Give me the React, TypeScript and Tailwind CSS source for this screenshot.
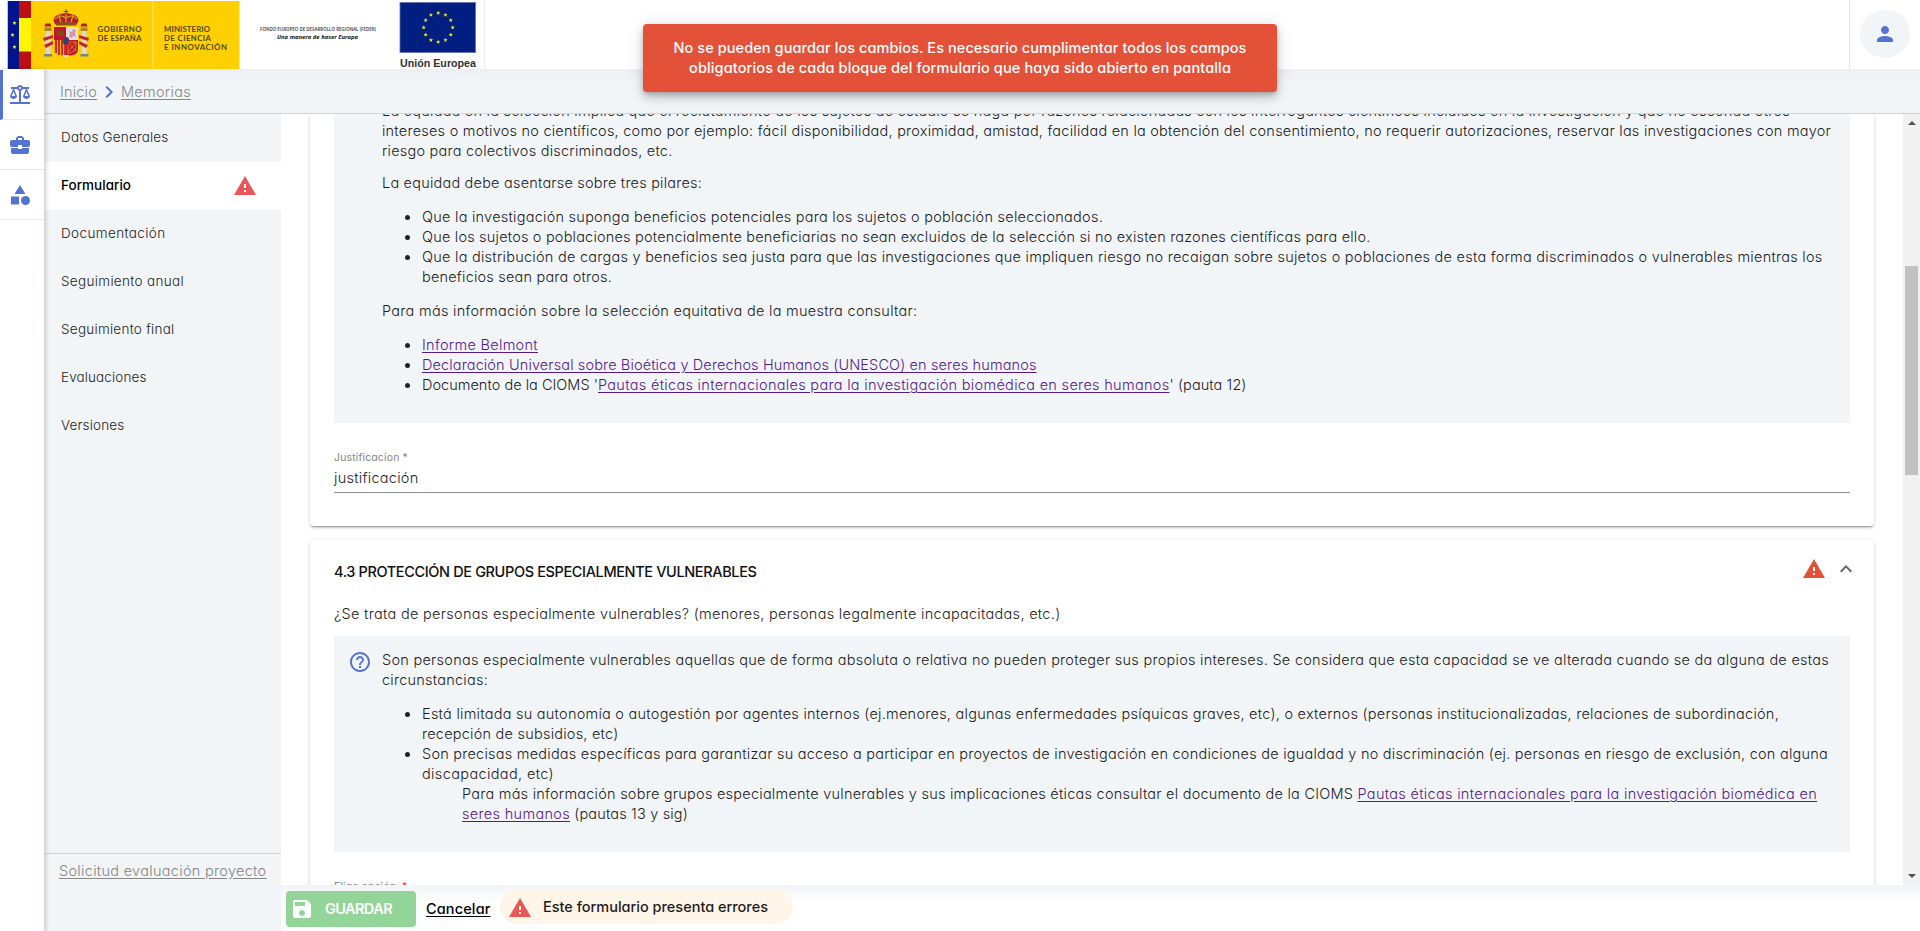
import { useLayoutEffect, useRef, useState } from 'react';
import {
  MdBalance,
  MdBusinessCenter,
  MdCategory,
  MdChevronRight,
  MdExpandLess,
  MdHelpOutline,
  MdPerson,
  MdSave,
  MdWarning,
} from 'react-icons/md';

/** Text run whose tracking is adjusted so that it takes `w` pixels. */
function Fit({ w, children, className = '' }: { w: number; children: string; className?: string }) {
  const ref = useRef<HTMLSpanElement>(null);
  const [spacing, setSpacing] = useState(0);
  useLayoutEffect(() => {
    const el = ref.current;
    if (!el) return;
    const previous = el.style.letterSpacing;
    el.style.letterSpacing = '0px';
    const natural = el.getBoundingClientRect().width;
    el.style.letterSpacing = previous;
    setSpacing((w - natural) / children.length);
  }, [w, children]);
  return (
    <span ref={ref} className={`whitespace-pre ${className}`} style={{ letterSpacing: `${spacing}px` }}>
      {children}
    </span>
  );
}

const link = 'text-[#551a8b] underline underline-offset-2';

function Line({ w, children }: { w: number; children: string }) {
  return (
    <div className="h-5">
      <Fit w={w}>{children}</Fit>
    </div>
  );
}

function Item({ children }: { children: React.ReactNode }) {
  return (
    <li className="flex">
      <span className="mt-2 mr-[12px] h-[5px] w-[5px] shrink-0 rounded-full bg-[#222]" />
      <div>{children}</div>
    </li>
  );
}

const starPath = 'M0-1 .24-.31.95-.31.38.12.59.81 0 .4-.59.81-.38.12-.95-.31-.24-.31Z';
const starAngles = [0, 30, 60, 90, 120, 150, 180, 210, 240, 270, 300, 330];

function GovLogo() {
  return (
    <svg width="484" height="69" viewBox="0 0 484 69" className="block shrink-0">
      <rect x="7" y="1" width="232.500" height="68" fill="#ffd000" />
      <rect x="8" y="1" width="12" height="68" fill="#00148c" />
      <rect x="19" y="1" width="12" height="68" fill="#bd1013" />
      <rect x="19" y="18" width="12" height="33.500" fill="#fff500" />
      <g fill="#fff04a">
        <path d={starPath} transform="translate(14.500 23) scale(2.300)" />
        <path d={starPath} transform="translate(12.500 35) scale(2.300)" />
        <path d={starPath} transform="translate(14.500 47) scale(2.300)" />
      </g>
      <rect x="152.300" y="1" width="1.300" height="68" fill="#ffe25c" />
      {/* coat of arms */}
      <g>
        <path d="M54 22c-2-5 3-8 12-9 9 1 14 4 12 9l-2 3H56Z" fill="#b3202a" />
        <path d="M55 19c4-4 7-4 11-1 4-3 7-3 11 1M59 15l2 8M73 15l-2 8M66 11v12" stroke="#d8a21d" strokeWidth="1.200" fill="none" />
        <path d="M65.200 9.500h1.600v1.500h1.500v1h-1.500v2h-1.600v-2h-1.500v-1h1.500Z" fill="#7a5a20" />
        <path d="M56 23c6-1.500 14-1.500 20 0v2.500H56Z" fill="#8f4b1d" />
        <path d="M54 27h12v13H54Z" fill="#c2152b" />
        <path d="M57 36v-6h1.500v1.500h1.300V30h1.600v1.500h1.300V30H64v6Z" fill="#7d4a18" />
        <path d="M66 27h12v13H66Z" fill="#eedcdc" />
        <path d="m69 37 1-3-1-3 3 1 1-3 3 1-1 3 1 4-3-1-1 2Z" fill="#cf9aa8" />
        <path d="M54 40h12v16c-7 0-12-2-12-7Z" fill="#f2b117" />
        <path d="M56 40v13M59 40v15M62 40v15.500M65 40v16" stroke="#c2152b" strokeWidth="1.600" />
        <path d="M66 40h12v9c0 5-5 7-12 7Z" fill="#c2152b" />
        <path d="M68 42h8v8l-8 4ZM68 42l8 9M76 42l-8 10" stroke="#dd8d22" strokeWidth=".8" fill="none" />
        <path d="M62 55h8l-4 2.500Z" fill="#e9e2d2" />
        <ellipse cx="66" cy="41" rx="3" ry="3.700" fill="#174a80" stroke="#b3202a" strokeWidth="1" />
        {/* pillars */}
        <rect x="46" y="30" width="4.500" height="24" fill="#ded8cc" />
        <rect x="82" y="30" width="4.500" height="24" fill="#ded8cc" />
        <path d="M44.500 27.500h7V31h-7ZM80.500 27.500h7V31h-7Z" fill="#a98524" />
        <path d="M45.500 23.500h5l1 3h-7ZM81.500 23.500h5l1 3h-7Z" fill="#b3202a" />
        <path d="M44 54h8v2.500h-8ZM80.500 54h8v2.500h-8Z" fill="#71868c" />
        <path d="m43 38 10-3v3l-9 3ZM44 45l9-4v3l-7 4ZM89 38l-10-3v3l9 3ZM88 45l-9-4v3l7 4Z" fill="#c0272d" />
      </g>
      <g fontFamily="Lato, 'Liberation Sans', sans-serif" fontSize="7.800" fontWeight="700" fill="#54480f">
        <text x="97.500" y="31.800" textLength="44">GOBIERNO</text>
        <text x="97.500" y="40.800" textLength="44">DE ESPAÑA</text>
        <text x="164" y="31.800" textLength="46">MINISTERIO</text>
        <text x="164" y="40.800" textLength="47">DE CIENCIA</text>
        <text x="164" y="49.800" textLength="63">E INNOVACIÓN</text>
      </g>
      <g fontFamily="'Open Sans', sans-serif" fill="#333">
        <text x="260" y="31" fontSize="4.600" fontWeight="600" textLength="116" lengthAdjust="spacingAndGlyphs">
          FONDO EUROPEO DE DESARROLLO REGIONAL (FEDER)
        </text>
        <text x="277" y="38.500" fontSize="5.800" fontWeight="700" fontStyle="italic" textLength="81" lengthAdjust="spacingAndGlyphs" fill="#111">
          Una manera de hacer Europa
        </text>
      </g>
      <rect x="400" y="2.500" width="75.500" height="50" fill="#001f80" stroke="#6073ae" strokeWidth=".8" />
      {starAngles.map((a) => (
        <path
          key={a}
          d={starPath}
          fill="#f7ec1e"
          transform={`translate(${438.2 + 14.5 * Math.sin((a * Math.PI) / 180)} ${27.5 - 14.5 * Math.cos((a * Math.PI) / 180)}) scale(2.3)`}
        />
      ))}
      <text x="400" y="66.500" fontFamily="'Liberation Sans', sans-serif" fontSize="10.500" fontWeight="700" fill="#333" textLength="76" lengthAdjust="spacingAndGlyphs">
        Unión Europea
      </text>
    </svg>
  );
}

const menu = [
  { label: 'Datos Generales', w: 107.5 },
  { label: 'Formulario', w: 70, active: true },
  { label: 'Documentación', w: 104.5 },
  { label: 'Seguimiento anual', w: 123 },
  { label: 'Seguimiento final', w: 113.5 },
  { label: 'Evaluaciones', w: 85.5 },
  { label: 'Versiones', w: 63.5 },
];

const card = 'shrink-0 bg-white px-6 shadow-[0_3px_1px_-2px_rgba(0,0,0,0.2),0_2px_2px_0_rgba(0,0,0,0.14),0_1px_5px_0_rgba(0,0,0,0.12)]';

export default function App() {
  return (
    <div className="relative flex h-[931px] w-[1920px] flex-col overflow-hidden bg-white font-['Inter','Open_Sans',sans-serif] text-[14.5px] leading-5 font-light text-[#1c1c1c] [font-feature-settings:'cv11']">
      <header className="flex h-[69px] shrink-0 justify-between bg-white">
        <div className="flex border-r border-[#ececf0]">
          <GovLogo />
        </div>
        <div className="flex w-[71px] items-start border-l border-[#e6e7ea] pt-[10px] pl-[10px]">
          <div className="flex h-12 w-[50px] items-center justify-center rounded-[50%] bg-[#f1f5f8]">
            <MdPerson size={24} color="#5472d0" />
          </div>
        </div>
      </header>

      <div className="flex min-h-0 flex-1">
        <nav className="z-10 flex w-[45px] shrink-0 flex-col border-r border-[#d5d7da] bg-white pt-px text-[#5472d0] shadow-[1px_0_4px_rgba(0,0,0,0.18)]">
          <div className="flex h-[50px] items-center border-b border-l-[3px] border-b-[#e8e8e8] border-l-[#5472d0] pl-[5px]">
            <MdBalance size={24} />
          </div>
          <div className="flex h-[50px] items-center border-b border-[#e8e8e8] pl-2">
            <MdBusinessCenter size={24} />
          </div>
          <div className="flex h-[50px] items-center border-b border-[#e8e8e8] pl-2">
            <MdCategory size={24} />
          </div>
        </nav>

        <div className="flex min-w-0 flex-1 flex-col">
          <div className="flex h-[45px] shrink-0 items-center border-b border-[#cfd4d9] bg-linear-to-b from-[#edeff5] to-[#f1f5f8] to-30% pt-[2px] pl-[15px] text-[#868686]">
            <Fit w={37} className="underline underline-offset-2">Inicio</Fit>
            <MdChevronRight size={24} color="#4f6fd0" className="-mt-px" />
            <Fit w={70} className="underline underline-offset-2">Memorias</Fit>
          </div>

          <div className="flex min-h-0 flex-1">
            <aside className="flex w-[236px] shrink-0 flex-col justify-between bg-[#f1f5f8]">
              <ul className="text-[13.5px]">
                {menu.map((m) => (
                  <li
                    key={m.label}
                    className={m.active ? 'flex h-12 items-center justify-between bg-white pr-6 pl-4 font-medium text-black' : 'flex h-12 items-center pl-4'}
                  >
                    <Fit w={m.w} className="-mt-[2px]">{m.label}</Fit>
                    {m.active && <MdWarning size={24} color="#eb5757" />}
                  </li>
                ))}
              </ul>
              <div className="h-[78px] border-t border-[#cfd4d9] pt-[7px] pl-[14px] text-[#868686]">
                <Fit w={207.5} className="underline underline-offset-2">Solicitud evaluación proyecto</Fit>
              </div>
            </aside>

            <div className="flex min-w-0 flex-1 flex-col">
              <div className="flex h-[771px] shrink-0">
                <main className="flex h-[771px] flex-1 flex-col overflow-hidden pr-[29px] pl-[29px]">
                  <section className={`${card} h-[412px] rounded-b-[4px]`}>
                    <div className="h-[309px] overflow-hidden bg-[#f1f5f8] pl-12">
                      <div className="-mt-[13px]">
                        <Line w={1408}>La equidad en la selección implica que el reclutamiento de los sujetos de estudio se haga por razones relacionadas con los interrogantes científicos incluidos en la investigación y que no esconda otros</Line>
                        <Line w={1449}>intereses o motivos no científicos, como por ejemplo: fácil disponibilidad, proximidad, amistad, facilidad en la obtención del consentimiento, no requerir autorizaciones, reservar las investigaciones con mayor</Line>
                        <Line w={290.5}>riesgo para colectivos discriminados, etc.</Line>
                      </div>
                      <div className="mt-3">
                        <Line w={320}>La equidad debe asentarse sobre tres pilares:</Line>
                      </div>
                      <ul className="mt-[14px] pl-[23px]">
                        <Item><Line w={681}>Que la investigación suponga beneficios potenciales para los sujetos o población seleccionados.</Line></Item>
                        <Item><Line w={948.5}>Que los sujetos o poblaciones potencialmente beneficiarias no sean excluidos de la selección si no existen razones científicas para ello.</Line></Item>
                        <Item>
                          <Line w={1400.5}>Que la distribución de cargas y beneficios sea justa para que las investigaciones que impliquen riesgo no recaigan sobre sujetos o poblaciones de esta forma discriminados o vulnerables mientras los</Line>
                          <Line w={190}>beneficios sean para otros.</Line>
                        </Item>
                      </ul>
                      <div className="mt-[14px]">
                        <Line w={535.5}>Para más información sobre la selección equitativa de la muestra consultar:</Line>
                      </div>
                      <ul className="mt-[14px] pl-[23px]">
                        <Item><Fit w={116} className={link}>Informe Belmont</Fit></Item>
                        <Item><Fit w={614.5} className={link}>Declaración Universal sobre Bioética y Derechos Humanos (UNESCO) en seres humanos</Fit></Item>
                        <Item>
                          <Fit w={176}>Documento de la CIOMS '</Fit>
                          <Fit w={571.5} className={link}>Pautas éticas internacionales para la investigación biomédica en seres humanos</Fit>
                          <Fit w={77}>' (pauta 12)</Fit>
                        </Item>
                      </ul>
                    </div>
                    <div className="mt-[27px] flex h-[43px] flex-col border-b border-[#8c8c8c]">
                      <div className="h-[18px] text-[10.5px] leading-4 font-normal text-[#858585]"><Fit w={74}>Justificacion *</Fit></div>
                      <div><Fit w={84.5}>justificación</Fit></div>
                    </div>
                  </section>

                  <section className={`${card} mt-[14px] h-[500px] rounded-[4px] pt-[22px]`}>
                    <div className="flex h-5 items-center justify-between">
                      <Fit w={422.5} className="font-medium text-[#111]">4.3 PROTECCIÓN DE GRUPOS ESPECIALMENTE VULNERABLES</Fit>
                      <div className="-mt-[6px] -mr-2 flex items-center gap-2">
                        <MdWarning size={24} color="#e44f37" />
                        <MdExpandLess size={24} color="#666" />
                      </div>
                    </div>
                    <div className="mt-[22px]"><Line w={726.5}>¿Se trata de personas especialmente vulnerables? (menores, personas legalmente incapacitadas, etc.)</Line></div>
                    <div className="mt-3 flex h-[216px] bg-[#f1f5f8] pt-[14px] pl-[14px]">
                      <MdHelpOutline size={24} color="#5472d0" className="mr-[10px] shrink-0" />
                      <div>
                        <Line w={1447}>Son personas especialmente vulnerables aquellas que de forma absoluta o relativa no pueden proteger sus propios intereses. Se considera que esta capacidad se ve alterada cuando se da alguna de estas</Line>
                        <Line w={106}>circunstancias:</Line>
                        <ul className="mt-[14px] pl-[23px]">
                          <Item>
                            <Line w={1357}>Está limitada su autonomía o autogestión por agentes internos (ej.menores, algunas enfermedades psíquicas graves, etc), o externos (personas institucionalizadas, relaciones de subordinación,</Line>
                            <Line w={196.5}>recepción de subsidios, etc)</Line>
                          </Item>
                          <Item>
                            <Line w={1406}>Son precisas medidas específicas para garantizar su acceso a participar en proyectos de investigación en condiciones de igualdad y no discriminación (ej. personas en riesgo de exclusión, con alguna</Line>
                            <Line w={132}>discapacidad, etc)</Line>
                            <div className="pl-10">
                              <div className="h-5">
                                <Fit w={895.5}>Para más información sobre grupos especialmente vulnerables y sus implicaciones éticas consultar el documento de la CIOMS </Fit>
                                <Fit w={459.5} className={link}>Pautas éticas internacionales para la investigación biomédica en</Fit>
                              </div>
                              <div className="h-5">
                                <Fit w={108} className={link}>seres humanos</Fit>
                                <Fit w={118}> (pautas 13 y sig)</Fit>
                              </div>
                            </div>
                          </Item>
                        </ul>
                      </div>
                    </div>
                    <div className="mt-[27px] text-[10.5px] leading-4 font-normal text-[#858585]">
                      <Fit w={68}>Elige opción: </Fit>
                      <span className="text-[#e53935]">*</span>
                    </div>
                  </section>
                </main>
                <div className="flex w-[17px] shrink-0 flex-col items-center justify-between bg-[#f1f1f1] py-[7px]">
                  <svg width="8" height="4" viewBox="0 0 8 4"><path d="M0 4 4 0l4 4Z" fill="#505050" /></svg>
                  <div className="mt-[141px] mb-auto h-[209px] w-[13px] bg-[#c1c1c1]" />
                  <svg width="8" height="4" viewBox="0 0 8 4"><path d="m0 0 4 4 4-4Z" fill="#505050" /></svg>
                </div>
              </div>

              <footer className="flex flex-1 items-start bg-linear-to-b from-[#f2f3f7] to-white to-35% pl-[5px]">
                <button className="mt-[6px] flex h-9 w-[130px] items-center rounded-[4px] bg-[#93d598] pl-1 font-semibold text-white">
                  <MdSave size={24} className="mr-[11px]" />
                  <Fit w={67}>GUARDAR</Fit>
                </button>
                <div className="mt-[14px] ml-[10px] font-medium text-black"><Fit w={64.5} className="underline underline-offset-2">Cancelar</Fit></div>
                <div className="mt-[5px] ml-[9.5px] flex h-[34px] w-[293px] items-center rounded-full bg-[#fff5e9] pl-2 font-medium">
                  <MdWarning size={24} color="#eb5757" className="mt-[2px]" />
                  <Fit w={225} className="ml-[11px]">Este formulario presenta errores</Fit>
                </div>
              </footer>
            </div>
          </div>
        </div>
      </div>

      <div className="absolute top-6 left-[643px] z-20 flex h-[68px] w-[634px] flex-col items-center justify-center rounded-[4px] bg-[#e45139] font-medium text-white shadow-[0_3px_5px_-1px_rgba(0,0,0,0.2),0_6px_10px_0_rgba(0,0,0,0.14),0_1px_18px_0_rgba(0,0,0,0.12)]">
        <Line w={573}>No se pueden guardar los cambios. Es necesario cumplimentar todos los campos</Line>
        <Line w={542}>obligatorios de cada bloque del formulario que haya sido abierto en pantalla</Line>
      </div>
    </div>
  );
}
